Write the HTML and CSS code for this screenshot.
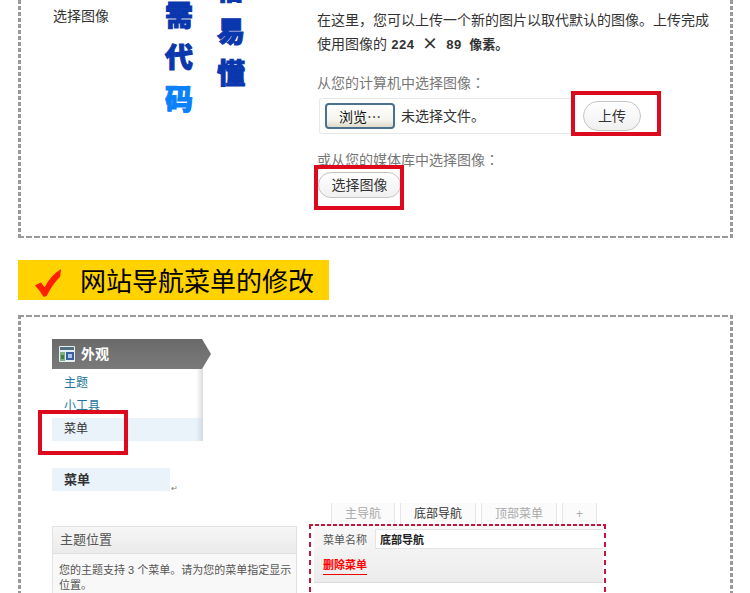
FILE: index.html
```html
<!DOCTYPE html>
<html lang="zh-CN">
<head>
    <meta charset="UTF-8">
    <meta name="viewport" content="width=device-width, initial-scale=1.0">
    <title>网站导航菜单的修改</title>
    <link rel="stylesheet" href="styles.css">
</head>
<body>
    <section class="panel panel-image">
        <h3 class="row-title">选择图像</h3>

        <div class="slogan">
            <p class="slogan-col"><span>需</span><span>代</span><span class="bright">码</span></p>
            <p class="slogan-col slogan-col-second"><span>俗</span><span>易</span><span>懂</span></p>
        </div>

        <div class="upload">
            <p class="hint">在这里，您可以上传一个新的图片以取代默认的图像。上传完成<br>使用图像的 <strong>224 <span class="times">×</span> 89 像素。</strong></p>

            <p class="upload-label">从您的计算机中选择图像<span class="colon" lang="zh-TW">：</span></p>
            <div class="file-row">
                <div class="file-box">
                    <button type="button" class="browse">浏览<span class="dots">…</span></button>
                    <span>未选择文件。</span>
                </div>
                <div class="marked mark-upload">
                    <button type="button" class="pill pill-upload">上传</button>
                </div>
            </div>

            <p class="upload-label">或从您的媒体库中选择图像<span class="colon" lang="zh-TW">：</span></p>
            <div class="marked mark-choose">
                <button type="button" class="pill">选择图像</button>
            </div>
        </div>
    </section>

    <h2 class="banner">
        <svg class="check" viewBox="0 0 28 30" aria-hidden="true">
            <path fill="#ff1e00" d="M0 18 L6 15 L10 20 Q16 8 27 1 L26 9 Q18 17 12 29 L9 30 Q5 23 0 18 Z"/>
        </svg>
        网站导航菜单的修改
    </h2>

    <section class="panel panel-menu">
        <nav class="side-menu">
            <div class="side-head">
                <svg class="side-icon" viewBox="0 0 16 16" aria-hidden="true">
                    <rect x="0" y="0" width="16" height="16" rx="1" fill="#e4eef0"/>
                    <rect x="1" y="1" width="14" height="3" fill="#52707f"/>
                    <rect x="1" y="6" width="5" height="9" fill="#7fae85"/>
                    <rect x="2" y="9" width="3" height="4" fill="#3f7d4b"/>
                    <rect x="7" y="6" width="8" height="8" fill="#3b5f9c"/>
                    <rect x="9" y="8" width="4" height="4" fill="#a9c5ec"/>
                </svg>
                外观
            </div>
            <ul class="side-list">
                <li><a href="#">主题</a></li>
                <li><a href="#">小工具</a></li>
                <li class="marked mark-menu current"><a href="#">菜单</a></li>
            </ul>
        </nav>

        <div class="crumb">
            <h4>菜单</h4>
            <span class="return">↵</span>
        </div>

        <div class="editor">
            <div class="location">
                <h4>主题位置</h4>
                <p>您的主题支持 3 个菜单。请为您的菜单指定显示位置。</p>
            </div>

            <div class="menu-edit">
                <div class="tabs">
                    <a href="#">主导航</a>
                    <a href="#" class="active">底部导航</a>
                    <a href="#">顶部菜单</a>
                    <a href="#" class="add">+</a>
                </div>
                <form class="menu-form">
                    <div class="menu-head">
                        <div class="name-row">
                            <label for="menuName">菜单名称</label>
                            <input type="text" id="menuName" value="底部导航">
                        </div>
                        <a href="#" class="delete">删除菜单</a>
                    </div>
                </form>
            </div>
        </div>
    </section>
</body>
</html>
```

FILE: styles.css
```css
*,
*::after {
    box-sizing: border-box;
}

body {
    display: flex;
    flex-direction: column;
    height: 100vh;
    margin: 0;
    padding: 0 17px 0 18px;
    overflow: hidden;
    background: #fff;
    color: #333;
    font-family: "Liberation Sans", "Noto Sans CJK SC", sans-serif;
    font-size: 14px;
}

h2, h3, h4, p, ul {
    margin: 0;
    padding: 0;
    font-weight: normal;
}

button {
    font-family: inherit;
    font-size: 14px;
    color: #333;
    padding: 0;
}

/* Dashed panels */
.panel {
    --dash-x: repeating-linear-gradient(90deg, #999 0 6px, #fff 6px 8px);
    --dash-y: repeating-linear-gradient(180deg, #999 0 4px, #fff 4px 6px);
    flex: none;
}

.panel-image {
    display: flex;
    height: 238px;
    padding: 0 21px 0 35px;
    background:
        var(--dash-x) bottom / 100% 2px no-repeat,
        var(--dash-y) left / 3px 100% no-repeat,
        var(--dash-y) right / 3px 100% no-repeat;
}

.row-title {
    width: 112px;
    padding-top: 6px;
    font-size: 14px;
    line-height: 20px;
}

/* Vertical slogan */
.slogan {
    display: flex;
    gap: 24px;
    width: 152px;
    color: #0a37ad;
    font-size: 28px;
    line-height: 42px;
    -webkit-text-stroke: 1px;
}

.slogan-col {
    width: 28px;
    margin-top: -4px;
    font-weight: 900;
}

.slogan-col-second {
    margin-top: -30px;
}

.slogan span {
    display: block;
}

.slogan .bright {
    color: #0a80fa;
}

/* Upload column */
.upload {
    flex: 1;
    min-width: 0;
}

.hint {
    margin-bottom: 13px;
    padding-top: 8px;
    overflow: hidden;
    line-height: 24px;
    white-space: nowrap;
}

.hint strong {
    font-family: "Liberation Mono", "Noto Sans CJK SC", monospace;
    font-size: 13px;
}

.times {
    font-family: "Noto Sans CJK SC", sans-serif;
    font-size: 16px;
    line-height: 20px;
}

.upload-label {
    color: #777;
    line-height: 22px;
}

.colon {
    font-family: "Noto Sans CJK TC", sans-serif;
}

.file-row {
    display: flex;
    align-items: center;
    height: 36px;
    margin: 4px 0 14px 2px;
}

.file-box {
    display: flex;
    align-items: center;
    gap: 6px;
    width: 252px;
    height: 36px;
    padding-left: 5px;
    border: 1px solid #e8e8e8;
    border-right: 0;
    border-radius: 3px 0 0 3px;
    line-height: 20px;
}

.browse {
    width: 70px;
    height: 26px;
    border: 2px solid #4a728f;
    border-radius: 4px;
    background: linear-gradient(#fff, #f4f3ec 70%, #dfdccb);
    color: #111;
    line-height: 20px;
}

.dots {
    font-family: "Noto Sans CJK SC", sans-serif;
}

.pill {
    display: block;
    width: 83px;
    height: 26px;
    padding-bottom: 2px;
    border: 1px solid #c4c4c4;
    border-radius: 15px;
    background: linear-gradient(#fff, #f0f0f0);
}

.pill-upload {
    width: 58px;
    height: 30px;
}

/* Red highlight frames */
.marked {
    position: relative;
}

.marked::after {
    content: "";
    position: absolute;
    width: 90px;
    height: 45px;
    border: 4px solid #dc0a1c;
}

.mark-upload {
    margin-left: 12px;
}

.mark-upload::after {
    top: -10px;
    left: -12px;
}

.mark-choose {
    width: 83px;
    margin: 1px 0 0 1px;
}

.mark-choose::after {
    top: -7px;
    left: -4px;
}

.mark-menu::after {
    top: -8px;
    left: -14px;
}

/* Yellow heading */
.banner {
    display: flex;
    flex: none;
    align-items: center;
    align-self: flex-start;
    gap: 18px;
    height: 40px;
    margin: 22px 0 15px;
    padding: 4px 15px 0 17px;
    background: #ffd200;
    color: #000;
    font-size: 26px;
    line-height: 36px;
}

.check {
    width: 27px;
    height: 29px;
}

/* Menu panel */
.panel-menu {
    flex: 1;
    min-height: 0;
    padding: 24px 21px 0 34px;
    background:
        var(--dash-x) top / 100% 2px no-repeat,
        var(--dash-y) left / 3px 100% no-repeat,
        var(--dash-y) right / 3px 100% no-repeat;
}

.side-menu {
    width: 159px;
    font-size: 12px;
}

.side-head {
    display: flex;
    align-items: center;
    gap: 6px;
    height: 30px;
    padding-left: 7px;
    background: linear-gradient(#6a6a6a, #7a7a7a);
    clip-path: polygon(0 0, 150px 0, 100% 50%, 150px 100%, 0 100%);
    color: #fff;
    font-size: 14px;
    font-weight: bold;
    line-height: 26px;
}

.side-icon {
    width: 16px;
    height: 16px;
}

.side-list {
    width: 151px;
    padding-top: 3px;
    background: linear-gradient(90deg, #fff 144px, #ddd);
    list-style: none;
    line-height: 23px;
}

.side-list li {
    height: 23px;
    padding-left: 12px;
}

.side-list a {
    color: #21759b;
    text-decoration: none;
}

.side-list .current {
    background: linear-gradient(90deg, #eaf2fa 144px, #d3dae2);
}

.side-list .current a {
    color: #333;
}

.crumb {
    display: flex;
    align-items: flex-end;
    margin-top: 27px;
}

.crumb h4 {
    width: 118px;
    padding-left: 12px;
    background: #eaf2fa;
    font-size: 13px;
    font-weight: bold;
    line-height: 23px;
}

.return {
    height: 8px;
    margin-left: 1px;
    color: #777;
    font-size: 8px;
    line-height: 12px;
}

/* Menu editor */
.editor {
    display: flex;
    align-items: flex-start;
    margin-top: 12px;
}

.location {
    width: 245px;
    height: 90px;
    margin: 23px 12px 0 0;
    border: 1px solid #e2e2e2;
    background: #f8f8f8;
    color: #555;
}

.location h4 {
    padding-left: 7px;
    border-bottom: 1px solid #dfdfdf;
    background: linear-gradient(#f6f6f6, #ebebeb);
    font-size: 13px;
    line-height: 26px;
}

.location p {
    padding: 9px 0 0 6px;
    font-size: 11px;
    line-height: 15px;
}

.menu-edit {
    width: 301px;
}

.tabs {
    display: flex;
    gap: 5px;
    height: 21px;
    padding-left: 22px;
}

.tabs a {
    padding: 0 13px;
    border: solid #e6e6e6;
    border-width: 0 1px;
    background: #fbfbfb;
    color: #aaa;
    font-size: 12px;
    line-height: 22px;
    text-decoration: none;
}

.tabs .active {
    color: #333;
}

.menu-form {
    --dot-x: repeating-linear-gradient(90deg, #c4153c 0 4px, #fff 4px 6px);
    --dot-y: repeating-linear-gradient(180deg, #c4153c 0 5px, #fff 5px 9px);
    width: 297px;
    height: 90px;
    padding: 2px 3px 0 5px;
    background:
        var(--dot-x) top / 100% 2px no-repeat,
        var(--dot-y) left / 2px 100% no-repeat,
        var(--dot-y) right / 2px 100% no-repeat;
}

.menu-head {
    height: 57px;
    border-bottom: 1px solid #ddd;
    background: linear-gradient(#f8f8f8, #ececec);
    color: #555;
    font-size: 11px;
}

.name-row {
    display: flex;
    align-items: center;
    gap: 8px;
    height: 24px;
    padding: 2px 0 0 9px;
}

.name-row input {
    flex: 1;
    min-width: 0;
    height: 20px;
    padding: 0 4px;
    border: 1px solid #e4e4e4;
    border-right: 0;
    background: #fff;
    color: #222;
    font-family: inherit;
    font-size: 11px;
    font-weight: bold;
}

.delete {
    display: inline-block;
    margin: 6px 0 0 9px;
    border-bottom: 1px solid #e00;
    color: #f00;
    font-size: 11px;
    font-weight: bold;
    line-height: 18px;
    text-decoration: none;
}
```
